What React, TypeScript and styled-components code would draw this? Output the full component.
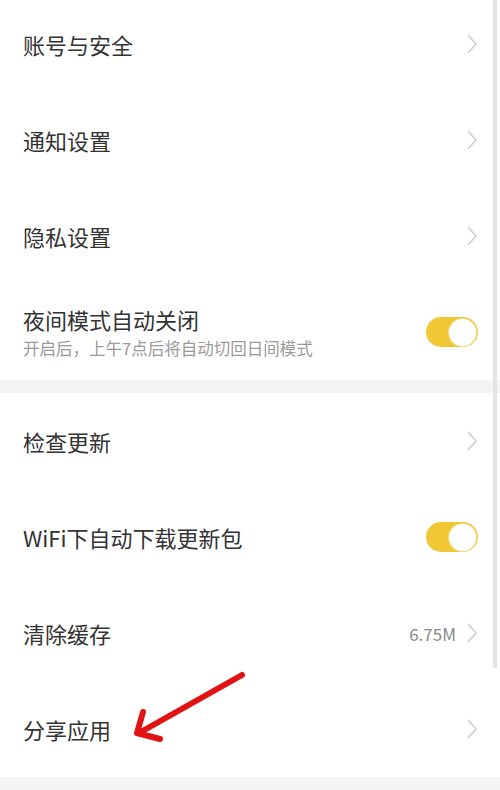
import styled, { createGlobalStyle } from "styled-components";

const Global = createGlobalStyle`
  html, body {
    margin: 0;
    padding: 0;
    background: #ffffff;
    overflow: hidden;
  }
  body {
    font-family: "Noto Sans CJK SC", "Noto Sans", sans-serif;
  }
`;

const Page = styled.div`
  position: relative;
  width: 500px;
  height: 790px;
  overflow: hidden;
  background: #ffffff;
`;

const Scroller = styled.div`
  margin-top: -4px;
`;

const Group = styled.div`
  background: #ffffff;
`;

const Gap = styled.div<{ $h: number }>`
  height: ${p => p.$h}px;
  background: #f4f4f4;
`;

const Row = styled.div`
  height: 96px;
  display: flex;
  align-items: center;
  padding: 0 22px 0 23px;
`;

const TextCol = styled.div`
  flex: 1;
  display: flex;
  flex-direction: column;
`;

const Title = styled.span`
  font-size: 22px;
  color: #333333;
  line-height: 28px;
`;

const Sub = styled.span`
  font-size: 16.5px;
  color: #9a9a9a;
  line-height: 22px;
  margin-top: 4px;
`;

const Value = styled.span`
  font-size: 17px;
  color: #8a8a8a;
  margin-right: 10px;
`;

const Chevron = styled.svg`
  width: 12px;
  height: 22px;
`;

const Toggle = styled.div`
  width: 52px;
  height: 30px;
  border-radius: 15px;
  background: #f0c835;
  display: flex;
  justify-content: flex-end;
  align-items: center;
  padding: 2px;
  box-sizing: border-box;
`;

const Knob = styled.div`
  width: 27px;
  height: 27px;
  border-radius: 50%;
  background: #ffffff;
  box-shadow: 0 0 0 1px #f3dc8a;
`;

const ScrollThumb = styled.div`
  position: absolute;
  top: 0;
  right: 3px;
  width: 4px;
  height: 668px;
  background: #e4e4e4;
`;

const Arrow = styled.svg`
  position: absolute;
  left: 125px;
  top: 665px;
  width: 130px;
  height: 85px;
`;

function Arr() {
  return (
    <Chevron viewBox="0 0 12 22">
      <path d="M2 2 L10 11 L2 20" fill="none" stroke="#cccccc" strokeWidth="1.5" />
    </Chevron>
  );
}

type Item = { title: string; sub?: string; value?: string; kind: "arrow" | "toggle" };

const first: Item[] = [
  { title: "账号与安全", kind: "arrow" },
  { title: "通知设置", kind: "arrow" },
  { title: "隐私设置", kind: "arrow" },
  { title: "夜间模式自动关闭", sub: "开启后，上午7点后将自动切回日间模式", kind: "toggle" },
];

const second: Item[] = [
  { title: "检查更新", kind: "arrow" },
  { title: "WiFi下自动下载更新包", kind: "toggle" },
  { title: "清除缓存", value: "6.75M", kind: "arrow" },
  { title: "分享应用", kind: "arrow" },
];

function SettingRow({ item }: { item: Item }) {
  return (
    <Row>
      <TextCol>
        <Title>{item.title}</Title>
        {item.sub && <Sub>{item.sub}</Sub>}
      </TextCol>
      {item.value && <Value>{item.value}</Value>}
      {item.kind === "arrow" ? (
        <Arr />
      ) : (
        <Toggle>
          <Knob />
        </Toggle>
      )}
    </Row>
  );
}

export default function App() {
  return (
    <Page>
      <Global />
      <Scroller>
        <Group>
          {first.map(i => (
            <SettingRow key={i.title} item={i} />
          ))}
        </Group>
        <Gap $h={13} />
        <Group>
          {second.map(i => (
            <SettingRow key={i.title} item={i} />
          ))}
        </Group>
        <Gap $h={20} />
      </Scroller>
      <ScrollThumb />
      <Arrow viewBox="0 0 130 85">
        <g stroke="#e01414" strokeWidth="6" strokeLinecap="round" strokeLinejoin="round" fill="none">
          <path d="M117 10 L14 68" />
          <path d="M18 47 L12 68 L35 74" />
        </g>
      </Arrow>
    </Page>
  );
}
